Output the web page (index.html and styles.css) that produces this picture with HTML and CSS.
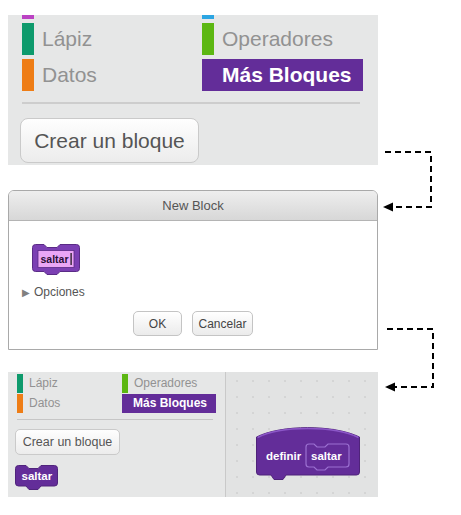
FILE: index.html
```html
<!DOCTYPE html>
<html lang="es">
<head>
<meta charset="utf-8">
<title>Crear un bloque</title>
<link rel="stylesheet" href="styles.css">
</head>
<body>
<div class="page">
  <section class="big-palette">
    <div class="cats">
      <div class="stub"><span class="bar sound"></span></div>
      <div class="stub"><span class="bar sensing"></span></div>
      <div class="cat"><span class="bar pen"></span><span class="label">Lápiz</span></div>
      <div class="cat"><span class="bar ops"></span><span class="label">Operadores</span></div>
      <div class="cat"><span class="bar data"></span><span class="label">Datos</span></div>
      <div class="cat active"><span class="bar more"></span><span class="label">Más Bloques</span></div>
    </div>
    <div class="sep"></div>
    <button class="make">Crear un bloque</button>
  </section>

  <section class="dialog">
    <div class="dialog-title">New Block</div>
    <div class="dialog-body">
      <svg class="proto" width="48" height="31" viewBox="0 0 48 31">
        <path d="M0.5,3.5 Q0.5,0.5 3.5,0.5 H12 L15,3.5 H25 L28,0.5 H44.5 Q47.5,0.5 47.5,3.5 V24.5 Q47.5,27.5 44.5,27.5 H28 L25,30.5 H15 L12,27.5 H3.5 Q0.5,27.5 0.5,24.5 Z" fill="#7b3fb3" stroke="#5a2b86"/>
        <rect x="6" y="6.5" width="36" height="17" fill="#eaa6f6" stroke="#5a2b86" stroke-width="0.8"/>
        <text x="8.5" y="19" class="proto-text">saltar</text>
        <rect x="38.5" y="9" width="1.2" height="12" fill="#111"/>
      </svg>
      <div class="options"><span class="tri">&#9654;</span><span>Opciones</span></div>
      <div class="buttons">
        <button class="btn ok">OK</button>
        <button class="btn cancel">Cancelar</button>
      </div>
    </div>
  </section>

  <section class="editor">
    <div class="small-palette">
      <div class="cats2">
        <div class="cat2"><span class="bar2 pen"></span><span class="label2">Lápiz</span></div>
        <div class="cat2"><span class="bar2 ops"></span><span class="label2">Operadores</span></div>
        <div class="cat2"><span class="bar2 data"></span><span class="label2">Datos</span></div>
        <div class="cat2 active"><span class="bar2 more"></span><span class="label2">Más Bloques</span></div>
      </div>
      <div class="sep2"></div>
      <button class="make2">Crear un bloque</button>
      <svg class="block2" width="43" height="25" viewBox="0 0 43 25">
        <path d="M0.5,3.5 Q0.5,0.5 3.5,0.5 H11 L14,3.5 H23 L26,0.5 H39.5 Q42.5,0.5 42.5,3.5 V18 Q42.5,21 39.5,21 H26 L23,24.5 H14 L11,21 H3.5 Q0.5,21 0.5,18 Z" fill="#632d99" stroke="#50247c"/>
        <text x="6.5" y="15" class="block-text">saltar</text>
      </svg>
    </div>
    <div class="scripts">
      <svg class="hat" width="104" height="54" viewBox="0 0 104 54">
        <path d="M0.5,10 C25,-2.5 78,-2.5 103.5,10 V45 Q103.5,48 100.5,48 H30 L27,52.5 H18 L15,48 H3.5 Q0.5,48 0.5,45 Z" fill="#632d99" stroke="#4f237a"/>
        <path d="M1.5,10.5 C25,-1.5 78,-1.5 102.5,10.5" fill="none" stroke="#8c57c8" stroke-width="1.5"/>
        <text x="10" y="33" class="hat-text">definir</text>
        <path d="M50,20 Q50,17 53,17 H58 L61,20 H69 L72,17 H90 Q93,17 93,20 V37 Q93,40 90,40 H72 L69,43 H61 L58,40 H53 Q50,40 50,37 Z" fill="none" stroke="#9b70d1" stroke-width="1.2"/>
        <text x="55" y="33" class="hat-text">saltar</text>
      </svg>
    </div>
  </section>

  <svg class="arrows" width="461" height="515" viewBox="0 0 461 515">
    <path d="M385,152 H431 V207 H393" fill="none" stroke="#000" stroke-width="2" stroke-dasharray="6 4"/>
    <polygon points="383,207 393,202.5 393,211.5" fill="#000"/>
    <path d="M387,329 H433 V387 H395" fill="none" stroke="#000" stroke-width="2" stroke-dasharray="6 4"/>
    <polygon points="385,387 395,382.5 395,391.5" fill="#000"/>
  </svg>
</div>
</body>
</html>
```

FILE: styles.css
```css
html, body {
  margin: 0;
  padding: 0;
  background: #ffffff;
}

.page {
  position: relative;
  width: 461px;
  height: 515px;
  overflow: hidden;
  padding: 15px 0 0 8px;
  box-sizing: border-box;
  font-family: "Liberation Sans", Arial, sans-serif;
}

/* ---------- big palette ---------- */
.big-palette {
  width: 370px;
  height: 150px;
  background: #e6e7e7;
  overflow: hidden;
}

.cats {
  display: grid;
  grid-template-columns: 180px 161px;
  grid-template-rows: 4px 32px 32px;
  row-gap: 4px;
  padding-left: 14px;
}

.stub .bar {
  display: block;
  width: 12px;
  height: 4px;
}

.cat {
  display: flex;
  align-items: stretch;
}

.cat .bar {
  width: 12px;
  flex: none;
}

.cat .label {
  margin-left: 8px;
  font-size: 21px;
  line-height: 32px;
  color: #929292;
  white-space: nowrap;
}

.cat.active {
  background: #632d99;
}

.cat.active .label {
  color: #ffffff;
  font-weight: bold;
}

.sound { background: #bb42c3; }
.sensing { background: #2ca5e2; }
.pen { background: #0e9a6c; }
.ops { background: #5cb712; }
.data { background: #ee7d16; }
.more { background: #632d99; }

.sep {
  margin: 11px 0 0 14px;
  width: 338px;
  height: 2px;
  background: #cdcdcd;
}

.make {
  display: block;
  margin: 14px 0 0 12px;
  width: 179px;
  height: 45px;
  padding: 0;
  border: 1px solid #cacaca;
  border-radius: 8px;
  background: linear-gradient(#fefefe, #ececec);
  font-family: "Liberation Sans", Arial, sans-serif;
  font-size: 21px;
  color: #555555;
}

/* ---------- dialog ---------- */
.dialog {
  margin-top: 25px;
  width: 370px;
  height: 160px;
  box-sizing: border-box;
  border: 1px solid #a9a9a9;
  border-radius: 6px 6px 0 0;
  background: #ffffff;
  overflow: hidden;
}

.dialog-title {
  height: 29px;
  line-height: 29px;
  border-bottom: 1px solid #b4b4b4;
  background: linear-gradient(#eeeeee, #d7d7d7);
  text-align: center;
  font-size: 13px;
  color: #555555;
}

.dialog-body {
  padding-top: 23px;
}

.proto {
  display: block;
  margin-left: 23px;
}

.proto-text {
  font-family: "Liberation Sans", Arial, sans-serif;
  font-weight: bold;
  font-size: 10.5px;
  fill: #2a1038;
}

.options {
  display: flex;
  align-items: center;
  margin: 10px 0 0 13px;
  height: 14px;
  font-size: 12px;
  color: #555555;
}

.tri {
  font-size: 10px;
  color: #808080;
  margin-right: 4px;
}

.buttons {
  display: flex;
  justify-content: center;
  gap: 10px;
  margin-top: 12px;
}

.btn {
  height: 25px;
  padding: 0;
  border: 1px solid #c4c4c4;
  border-radius: 5px;
  background: linear-gradient(#ffffff, #ebebeb);
  font-family: "Liberation Sans", Arial, sans-serif;
  font-size: 12px;
  color: #444444;
}

.ok { width: 49px; }
.cancel { width: 61px; }

/* ---------- editor ---------- */
.editor {
  margin-top: 22px;
  width: 370px;
  height: 125px;
  display: flex;
}

.small-palette {
  width: 217px;
  flex: none;
  background: #e6e7e7;
}

.cats2 {
  display: grid;
  grid-template-columns: 105px 94px;
  grid-template-rows: 19px 19px;
  row-gap: 1px;
  padding: 2px 0 0 9px;
}

.cat2 {
  display: flex;
  align-items: stretch;
}

.bar2 {
  width: 6px;
  flex: none;
}

.label2 {
  margin-left: 6px;
  font-size: 12px;
  line-height: 19px;
  color: #929292;
  white-space: nowrap;
}

.cat2.active {
  background: #632d99;
}

.cat2.active .label2 {
  color: #ffffff;
  font-weight: bold;
  margin-left: 5px;
}

.sep2 {
  margin: 6px 0 0 9px;
  width: 196px;
  height: 1px;
  background: #c6c6c6;
}

.make2 {
  display: block;
  margin: 9px 0 0 7px;
  width: 105px;
  height: 26px;
  padding: 0;
  border: 1px solid #cacaca;
  border-radius: 5px;
  background: linear-gradient(#fefefe, #ececec);
  font-family: "Liberation Sans", Arial, sans-serif;
  font-size: 12.5px;
  color: #555555;
}

.block2 {
  display: block;
  margin: 10px 0 0 7px;
}

.block-text,
.hat-text {
  font-family: "Liberation Sans", Arial, sans-serif;
  font-weight: bold;
  font-size: 11.5px;
  fill: #ffffff;
}

.scripts {
  flex: 1;
  border-left: 1px solid #c9c9c9;
  background-color: #e2e3e3;
  background-image: radial-gradient(circle, #d3d4d4 0.7px, transparent 1.2px);
  background-size: 16px 16px;
  background-position: 3px 1px;
  padding: 55px 0 0 30px;
}

.hat {
  display: block;
}

/* ---------- arrows ---------- */
.arrows {
  position: absolute;
  left: 0;
  top: 0;
  pointer-events: none;
}
```
